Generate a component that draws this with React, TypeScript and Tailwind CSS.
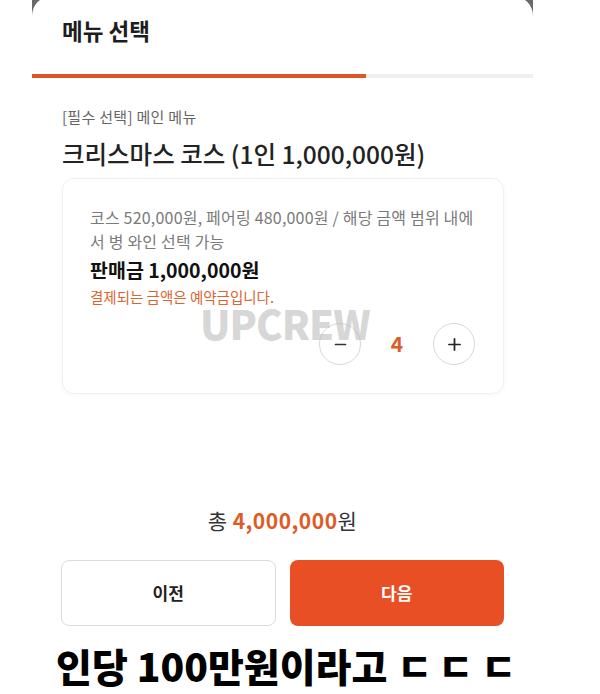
import { Minus, Plus } from "lucide-react";

const font = { fontFamily: '"Noto Sans CJK KR", "Noto Sans", sans-serif' };

function Stepper({ count }: { count: number }) {
  return (
    <div className="mt-[16px] flex items-center justify-end pr-[28px]">
      <button className="flex h-[42px] w-[42px] items-center justify-center rounded-full border border-[#d8d8d8] bg-white text-[#333]">
        <Minus size={17} strokeWidth={2.4} />
      </button>
      <span className="w-[72px] text-center text-[21px] font-semibold text-[#d8602a]">{count}</span>
      <button className="flex h-[42px] w-[42px] items-center justify-center rounded-full border border-[#d8d8d8] bg-white text-[#222]">
        <Plus size={19} strokeWidth={2.2} />
      </button>
    </div>
  );
}

export default function App() {
  return (
    <div className="relative h-[694px] w-[600px] overflow-hidden bg-white" style={font}>
      <div className="relative ml-[32px] h-[720px] w-[501px] bg-[#6a6a6a]">
        <div className="-mt-[4px] h-full rounded-t-[20px] bg-white pt-[19px]">
          {/* 헤더 */}
          <h1 className="pl-[30px] text-[22.5px] font-bold leading-[30px] text-[#1d1d1d]">메뉴 선택</h1>
          <div className="mt-[29px] h-[4px] w-full bg-[#efefef]">
            <div className="h-full w-[334px] bg-[#e0542a]" />
          </div>

          <div className="px-[30px]">
            <p className="mt-[29px] text-[15px] leading-[20px] tracking-[0.3px] text-[#666]">[필수 선택] 메인 메뉴</p>
            <h2 className="mt-[12px] text-[24.5px] font-medium leading-[30px] text-[#222]">
              크리스마스 코스 (1인 1,000,000원)
            </h2>

            {/* 메뉴 카드 */}
            <div className="relative mt-[9px] w-[442px] rounded-[12px] border border-[#f0f0f0] pb-[28px] pl-[27px] pt-[26px] shadow-[0_1px_4px_rgba(0,0,0,0.04)]">
              <p className="text-[16px] leading-[24px] tracking-[0.2px] text-[#7a7a7a]">
                코스 520,000원, 페어링 480,000원 / 해당 금액 범위 내에
                <br />
                서 병 와인 선택 가능
              </p>
              <p className="mt-[4px] text-[19.5px] font-bold leading-[26px] text-[#111]">판매금 1,000,000원</p>
              <p className="mt-[4px] text-[14.5px] leading-[20px] text-[#d9652f]">결제되는 금액은 예약금입니다.</p>
              <Stepper count={4} />
              <span className="pointer-events-none absolute left-[137px] top-[129px] text-[40px] font-black leading-[30px] tracking-[-1px] text-[#bdbdbd]/60">
                UPCREW
              </span>
            </div>
          </div>

          {/* 합계 */}
          <p className="mt-[112px] text-center text-[21px] leading-[28px] tracking-[0.5px] text-[#333]">
            총 <span className="font-bold text-[#dd5c26]">4,000,000</span>원
          </p>

          <div className="mt-[26px] flex gap-[14px] px-[29px]">
            <button className="h-[66px] w-[215px] rounded-[8px] border border-[#dcdcdc] bg-white text-[17px] font-bold text-[#222]">
              이전
            </button>
            <button className="h-[66px] w-[215px] rounded-[8px] bg-[#e84f24] text-[17px] font-bold text-white">
              다음
            </button>
          </div>
        </div>
      </div>

      <p className="absolute left-[56px] top-[643px] flex items-center text-[39px] font-black leading-[44px] text-black">
        인당 100만원이라고
        <span className="ml-[10px] text-[38px]">ㄷ</span>
        <span className="ml-[6px] text-[38px]">ㄷ</span>
        <span className="ml-[8px] text-[38px]">ㄷ</span>
      </p>
    </div>
  );
}
